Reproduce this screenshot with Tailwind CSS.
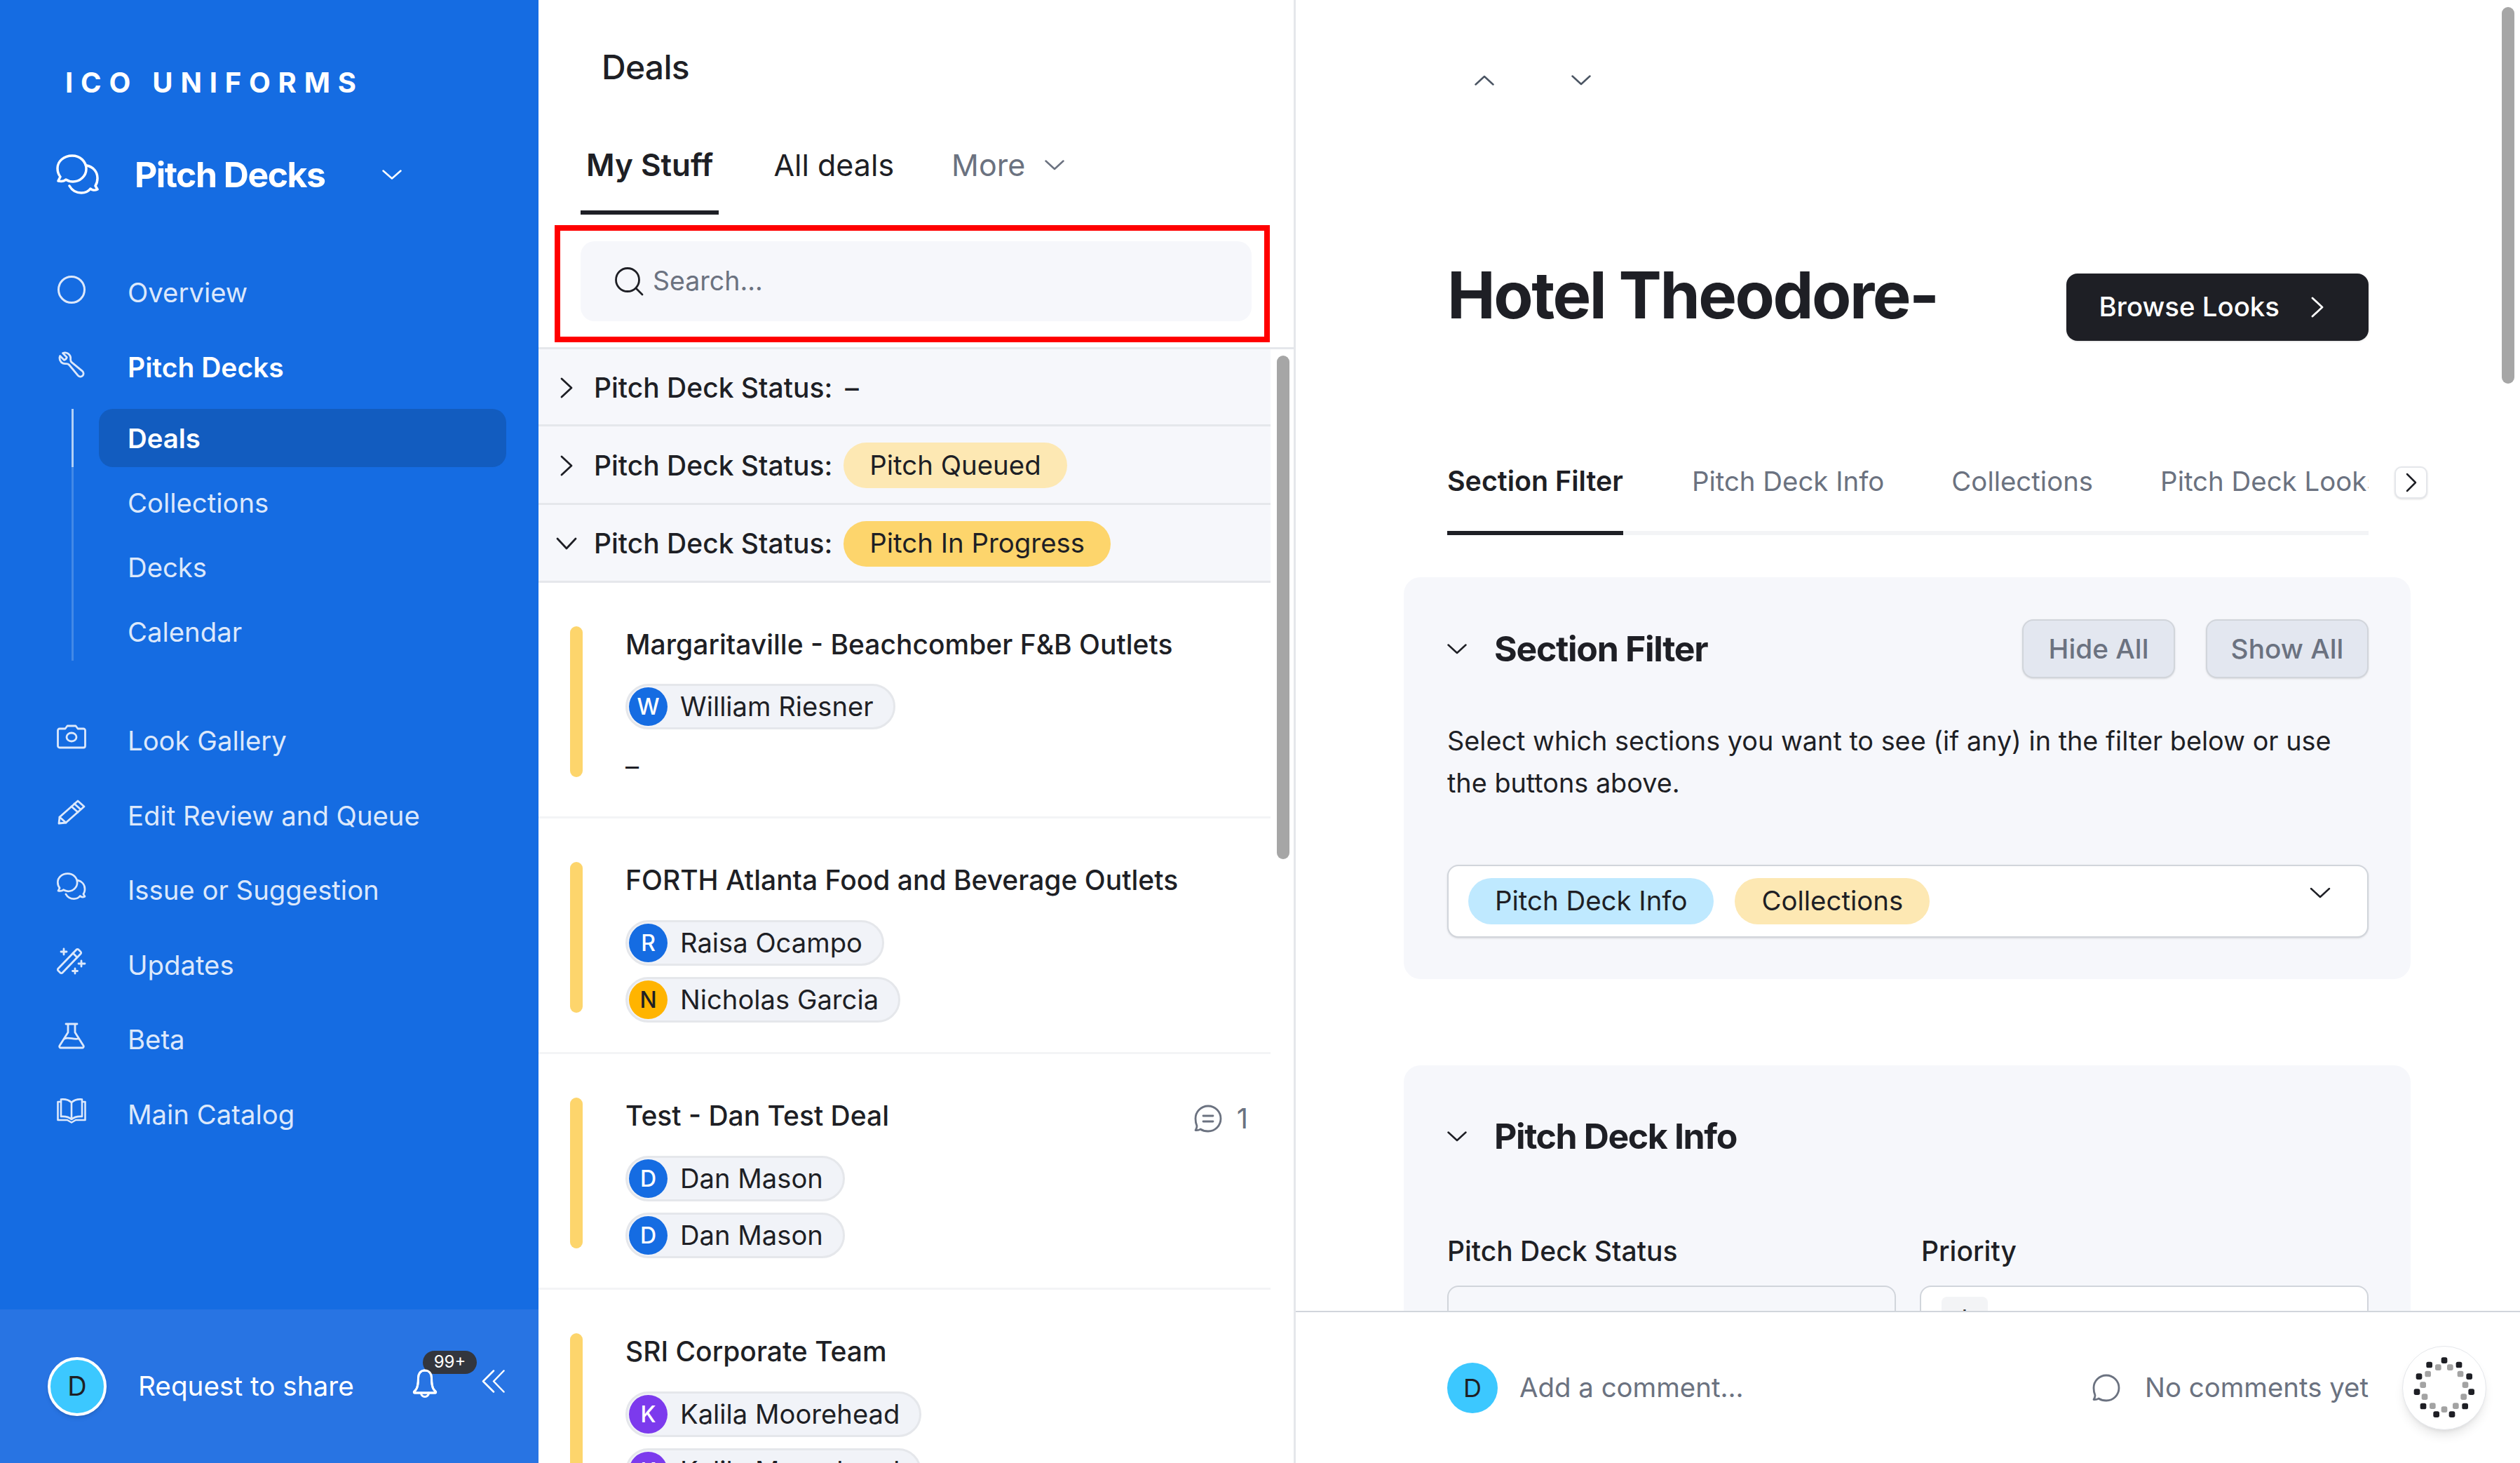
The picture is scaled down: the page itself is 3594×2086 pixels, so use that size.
<!DOCTYPE html>
<html lang="en">
<head>
    <meta charset="UTF-8">
    <title>ICO Uniforms - Deals</title>
    <script src="https://cdn.jsdelivr.net/npm/@tailwindcss/browser@4"></script>
</head>
<body class="bg-white">
<div class="flex w-[3594px] h-[2086px] overflow-hidden bg-white text-[#1e1f25] antialiased font-['Inter',sans-serif]">

    <!-- sidebar -->
    <aside class="flex flex-col w-[768px] shrink-0 bg-[#156ce2] text-white">
        <div class="pt-[98px] pl-[93px] h-[138px] text-[40px] leading-[40px] font-bold tracking-[0.27em] whitespace-nowrap">ICO UNIFORMS</div>
        <div class="flex items-center h-[60px] mt-[81px] pl-[80px]">
            <svg class="w-[62px] h-[58px] shrink-0" viewBox="0 0 62 58" fill="none" stroke="currentColor" stroke-width="3.5" stroke-linejoin="round" stroke-linecap="round"><path d="M23 2C11 2 2 10 2 20c0 5 1.500 9 4 12l-3 6c5 1 9 0 11-2 3 2 6 3 10 3 10 0 19-8 19-18C43 10 34 2 23 2z"/><path d="M44 16c9 2 15 9 15 18 0 4-1 8-3 11l3 5c-4 2-8 1-10-1-3 4-8 6-13 6-7 0-13-3-17-10"/></svg>
            <span class="ml-[50px] text-[50px] leading-[60px] font-bold tracking-[-0.031em] whitespace-nowrap">Pitch Decks</span>
            <svg class="w-[28px] h-[14px] ml-[82px]" viewBox="0 0 28 14" fill="none" stroke="currentColor" stroke-width="2.500" stroke-linecap="round" stroke-linejoin="round"><path d="M1.500 1.500 14 12.500 26.500 1.500"/></svg>
        </div>

        <nav class="mt-[84px] text-[38.300px] leading-[50px] text-[#dce8fb]">
            <a class="flex items-center h-[107px] pl-[81px]">
                <span class="flex justify-center w-[101px] pr-[59px] mb-[8px]"><svg class="w-[42px] h-[42px] shrink-0" viewBox="0 0 42 42" fill="none" stroke="currentColor" stroke-width="3"><circle cx="21" cy="21" r="18.500"/></svg></span>
                Overview
            </a>
            <a class="flex items-center h-[107px] pl-[81px] text-[39px] text-white font-semibold">
                <span class="flex justify-center w-[101px] pr-[59px] mb-[8px] text-[#dce8fb]"><svg class="w-[42px] h-[42px] shrink-0" viewBox="0 0 24 24" fill="none" stroke="currentColor" stroke-width="1.600" stroke-linecap="round" stroke-linejoin="round"><g transform="translate(24 0) scale(-1 1)"><path d="M21.750 6.750a4.500 4.500 0 01-4.884 4.484c-1.076-.091-2.264.071-2.950.904l-7.152 8.684a2.548 2.548 0 11-3.586-3.586l8.684-7.152c.833-.686.995-1.874.904-2.950a4.500 4.500 0 016.336-4.486l-3.276 3.276a3.004 3.004 0 002.250 2.250l3.276-3.276c.280.633.402 1.330.402 2.032z"/></g></svg></span>
                Pitch Decks
            </a>
            <div class="relative flex flex-col gap-[9px] mt-[6px] ml-[141px] w-[581px]">
                <span class="absolute -left-[39px] top-0 bottom-0 w-[3px] bg-white/20"></span>
                <span class="absolute -left-[39px] top-0 h-[83px] w-[3px] bg-white/60"></span>
                <a class="flex items-center h-[83px] pl-[41px] rounded-[20px] bg-[#125cbf] text-white font-semibold">Deals</a>
                <a class="flex items-center h-[83px] pl-[41px]">Collections</a>
                <a class="flex items-center h-[83px] pl-[41px]">Decks</a>
                <a class="flex items-center h-[83px] pl-[41px]">Calendar</a>
            </div>
            <div class="mt-[61px]">
                <a class="flex items-center h-[106.500px] pl-[81px]">
                    <span class="flex justify-center w-[101px] pr-[59px] mb-[10px]"><svg class="w-[42px] h-[36px] shrink-0" viewBox="0 0 42 36" fill="none" stroke="currentColor" stroke-width="2.800" stroke-linejoin="round"><path d="M4 6h8l3-4h12l3 4h8a2.500 2.500 0 0 1 2.500 2.500v22a2.500 2.500 0 0 1-2.500 2.500H4a2.500 2.500 0 0 1-2.500-2.500v-22A2.500 2.500 0 0 1 4 6z"/><ellipse cx="21" cy="18" rx="7" ry="6"/></svg></span>
                    Look Gallery
                </a>
                <a class="flex items-center h-[106.500px] pl-[81px]">
                    <span class="flex justify-center w-[101px] pr-[59px] mb-[10px]"><svg class="w-[40px] h-[36px] shrink-0" viewBox="0 0 40 36" fill="none" stroke="currentColor" stroke-width="2.800" stroke-linejoin="round" stroke-linecap="round"><path d="M29 2l9 8L12 33l-10 1 1-9z"/><path d="M24 6l9 8M20 10l9 8M3 25l9 8"/></svg></span>
                    Edit Review and Queue
                </a>
                <a class="flex items-center h-[106.500px] pl-[81px]">
                    <span class="flex justify-center w-[101px] pr-[59px] mb-[10px]"><svg class="w-[42px] h-[40px] shrink-0" viewBox="0 0 62 58" fill="none" stroke="currentColor" stroke-width="4" stroke-linejoin="round" stroke-linecap="round"><path d="M23 2C11 2 2 10 2 20c0 5 1.500 9 4 12l-3 6c5 1 9 0 11-2 3 2 6 3 10 3 10 0 19-8 19-18C43 10 34 2 23 2z"/><path d="M44 16c9 2 15 9 15 18 0 4-1 8-3 11l3 5c-4 2-8 1-10-1-3 4-8 6-13 6-7 0-13-3-17-10"/></svg></span>
                    Issue or Suggestion
                </a>
                <a class="flex items-center h-[106.500px] pl-[81px]">
                    <span class="flex justify-center w-[101px] pr-[59px] mb-[10px]"><svg class="w-[42px] h-[40px] shrink-0" viewBox="0 0 42 40" fill="none" stroke="currentColor" stroke-width="2.800" stroke-linejoin="round" stroke-linecap="round"><path d="M2 30L28 3a2 2 0 0 1 3 0l3 3a2 2 0 0 1 0 3L8 36a2 2 0 0 1-3 0l-3-3a2 2 0 0 1 0-3z"/><path d="M23 8l6 6"/><path d="M10 2v8M6 6h8M35 19v8M31 23h9M26 30v7M22.500 33.500h7"/></svg></span>
                    Updates
                </a>
                <a class="flex items-center h-[106.500px] pl-[81px]">
                    <span class="flex justify-center w-[101px] pr-[59px] mb-[10px]"><svg class="w-[38px] h-[38px] shrink-0" viewBox="0 0 38 38" fill="none" stroke="currentColor" stroke-width="2.800" stroke-linejoin="round" stroke-linecap="round"><path d="M11 2h16M14 2v12L2 33a2 2 0 0 0 2 3h30a2 2 0 0 0 2-3L24 14V2"/><path d="M9 23c6-3 13 2 20 0"/></svg></span>
                    Beta
                </a>
                <a class="flex items-center h-[106.500px] pl-[81px]">
                    <span class="flex justify-center w-[101px] pr-[59px] mb-[10px]"><svg class="w-[42px] h-[38px] shrink-0" viewBox="0 0 42 38" fill="none" stroke="currentColor" stroke-width="2.600" stroke-linejoin="round" stroke-linecap="round"><path d="M21 7C17 3 12 2 6 2.500V27c6-.5 11 .5 15 4 4-3.500 9-4.500 15-4V2.500C30 2 25 3 21 7zM21 7v24"/><path d="M6 6H1.500v26H15l6 3.500 6-3.500h13.500V6H36"/></svg></span>
                    Main Catalog
                </a>
            </div>
        </nav>

        <div class="flex items-center h-[219px] mt-auto pl-[68px] bg-[#2874e3]">
            <span class="flex items-center justify-center w-[84px] h-[84px] shrink-0 rounded-full border-[4px] border-white bg-[#3cc8ff] text-[#1e1f25] text-[38px] shadow-md">D</span>
            <span class="ml-[45px] text-[38.700px] text-white whitespace-nowrap">Request to share</span>
            <span class="relative ml-auto mr-[63px] mb-[8px]">
                <svg class="w-[36px] h-[42px]" viewBox="0 0 36 42" fill="none" stroke="white" stroke-width="3" stroke-linejoin="round" stroke-linecap="round"><path d="M18 2c-6.500 0-9.500 5-9.500 11 0 8-1 13-3 16l-3 3.500a1 1 0 0 0 1 1.500h29a1 1 0 0 0 1-1.500l-3-3.500c-2-3-3-8-3-16 0-6-3-11-9.500-11z"/><path d="M12.500 34a5.500 5.500 0 0 0 11 0"/></svg>
                <span class="absolute left-[15px] -top-[26px] flex items-center justify-center w-[77px] h-[33px] rounded-full bg-[#33363e] text-white text-[24px] leading-none">99+</span>
                <svg class="absolute left-0 top-0 w-[36px] h-[42px]" viewBox="0 0 36 42" fill="none" stroke="white" stroke-width="3" stroke-linejoin="round" stroke-linecap="round"><path d="M18 2c-6.500 0-9.500 5-9.500 11 0 8-1 13-3 16l-3 3.500a1 1 0 0 0 1 1.500h29a1 1 0 0 0 1-1.500l-3-3.500c-2-3-3-8-3-16 0-6-3-11-9.500-11z"/></svg>
            </span>
            <svg class="w-[33px] h-[33px] mr-[48px] mb-[14px]" viewBox="0 0 33 33" fill="none" stroke="white" stroke-width="2.500" stroke-linecap="round" stroke-linejoin="round"><path d="M17 1.500L2 16.500l15 15M31.500 1.500L17 16.500l14.500 15"/></svg>
        </div>
    </aside>

    <!-- deals list -->
    <section class="relative flex flex-col w-[1080px] shrink-0 border-r-[3px] border-[#e5e7eb]">
        <h1 class="pt-[66px] pl-[90px] h-[126px] text-[48px] leading-[60px] font-medium tracking-[-0.015em]">Deals</h1>
        <div class="flex gap-[70px] mt-[44px] pl-[60px] text-[43px]">
            <a class="flex items-center h-[136px] px-[8px] border-b-[6px] border-[#1e1f25] text-[44px] font-semibold">My Stuff</a>
            <a class="flex items-center h-[136px] px-[8px] border-b-[6px] border-transparent">All deals</a>
            <a class="flex items-center h-[136px] px-[8px] -ml-[4px] border-b-[6px] border-transparent text-[#6b7280]">More
                <svg class="w-[28px] h-[15px] ml-[28px]" viewBox="0 0 28 15" fill="none" stroke="currentColor" stroke-width="2.500" stroke-linecap="round" stroke-linejoin="round"><path d="M1.500 1.500 14 13 26.500 1.500"/></svg>
            </a>
        </div>
        <div class="mt-[15px] ml-[23px] w-[1020px] h-[167px] border-[8px] border-[#ff0000] pt-[15px] pl-[29px] pr-[18px]">
            <div class="flex items-center h-[114px] pl-[48px] rounded-[20px] bg-[#f6f7fb] text-[37.500px] text-[#6b7280]">
                <svg class="w-[42px] h-[42px] mr-[13px]" viewBox="0 0 42 42" fill="none" stroke="#1e1f25" stroke-width="2.800" stroke-linecap="round"><circle cx="19" cy="19" r="16.500"/><path d="M31 31l9 9"/></svg>
                Search...
            </div>
        </div>
        <div class="mt-[7px] border-t-[3px] border-[#e5e7eb] w-[1077px]"></div>

        <div class="w-[1044px] flex-1 overflow-hidden">
            <div class="flex items-center h-[110px] pt-[3px] border-b-[3px] border-[#e5e7eb] bg-[#f6f7fb] text-[39px] font-medium">
                <span class="flex justify-center w-[79px]"><svg class="w-[18px] h-[30px]" viewBox="0 0 18 30" fill="none" stroke="#1e1f25" stroke-width="2.800" stroke-linecap="round" stroke-linejoin="round"><path d="M2 2l14 13L2 28"/></svg></span>
                <span>Pitch Deck Status:</span><span class="ml-[18px]">–</span>
            </div>
            <div class="flex items-center h-[111.500px] pt-[3px] border-b-[3px] border-[#e5e7eb] bg-[#f6f7fb] text-[39px] font-medium">
                <span class="flex justify-center w-[79px]"><svg class="w-[18px] h-[30px]" viewBox="0 0 18 30" fill="none" stroke="#1e1f25" stroke-width="2.800" stroke-linecap="round" stroke-linejoin="round"><path d="M2 2l14 13L2 28"/></svg></span>
                <span>Pitch Deck Status:</span>
                <span class="flex items-center h-[65px] ml-[16px] px-[37px] rounded-full bg-[#fde8b3] text-[38.400px] font-normal">Pitch Queued</span>
            </div>
            <div class="flex items-center h-[111.500px] pt-[3px] border-b-[3px] border-[#e5e7eb] bg-[#f6f7fb] text-[39px] font-medium">
                <span class="flex justify-center w-[79px]"><svg class="w-[30px] h-[18px]" viewBox="0 0 30 18" fill="none" stroke="#1e1f25" stroke-width="2.800" stroke-linecap="round" stroke-linejoin="round"><path d="M2 2l13 14L28 2"/></svg></span>
                <span>Pitch Deck Status:</span>
                <span class="flex items-center h-[65px] ml-[16px] px-[37px] rounded-full bg-[#fdd56c] text-[38.400px] font-normal">Pitch In Progress</span>
            </div>

            <div class="flex h-[336px] pt-[62px] border-b-[3px] border-[#f3f4f6] text-[38.200px]">
                <span class="w-[18px] h-[215px] ml-[45px] shrink-0 rounded-full bg-[#fdd56c]"></span>
                <div class="ml-[61px] w-[888px]">
                    <div class="h-[58px] -mt-[3px] leading-[58px] text-[39px] font-medium">Margaritaville - Beachcomber F&amp;B Outlets</div>
                    <div class="flex flex-col items-start mt-[27px]">
                        <span class="flex items-center h-[65px] pl-[2px] pr-[28px] rounded-full border-[3px] border-[#e5e7eb] bg-[#f1f3f8]"><span class="flex items-center justify-center w-[55px] h-[55px] mr-[18px] rounded-full bg-[#156ce2] text-white text-[32px] font-medium">W</span>William Riesner</span>
                    </div>
                    <div class="mt-[32px] h-[40px] leading-[40px]">–</div>
                </div>
            </div>

            <div class="flex h-[336px] pt-[62px] border-b-[3px] border-[#f3f4f6] text-[38.200px]">
                <span class="w-[18px] h-[215px] ml-[45px] shrink-0 rounded-full bg-[#fdd56c]"></span>
                <div class="ml-[61px] w-[888px]">
                    <div class="h-[58px] -mt-[3px] leading-[58px] text-[39px] font-medium">FORTH Atlanta Food and Beverage Outlets</div>
                    <div class="flex flex-col items-start gap-[16px] mt-[28px]">
                        <span class="flex items-center h-[65px] pl-[2px] pr-[28px] rounded-full border-[3px] border-[#e5e7eb] bg-[#f1f3f8]"><span class="flex items-center justify-center w-[55px] h-[55px] mr-[18px] rounded-full bg-[#156ce2] text-white text-[32px] font-medium">R</span>Raisa Ocampo</span>
                        <span class="flex items-center h-[65px] pl-[2px] pr-[28px] rounded-full border-[3px] border-[#e5e7eb] bg-[#f1f3f8]"><span class="flex items-center justify-center w-[55px] h-[55px] mr-[18px] rounded-full bg-[#ffb400] text-[#1e1f25] text-[32px] font-medium">N</span>Nicholas Garcia</span>
                    </div>
                </div>
            </div>

            <div class="flex h-[336px] pt-[62px] border-b-[3px] border-[#f3f4f6] text-[38.200px]">
                <span class="w-[18px] h-[215px] ml-[45px] shrink-0 rounded-full bg-[#fdd56c]"></span>
                <div class="ml-[61px] w-[888px]">
                    <div class="flex items-center h-[58px] -mt-[3px] leading-[58px] text-[39px] font-medium">
                        Test - Dan Test Deal
                        <svg class="w-[40px] h-[40px] ml-auto mt-[8px]" viewBox="0 0 40 40" fill="none" stroke="#6b7280" stroke-width="2.800" stroke-linecap="round" stroke-linejoin="round"><path d="M20 2c10 0 18 8 18 18s-8 18-18 18c-4 0-8-1-11-3-2 1.500-4 1.800-7 1.500 1.500-2 2-3.500 2-6C2.500 27 2 23.500 2 20 2 10 10 2 20 2z"/><path d="M13 16h14M13 24h14"/></svg>
                        <span class="ml-[21px] mt-[8px] text-[40px] font-normal text-[#6b7280]">1</span>
                    </div>
                    <div class="flex flex-col items-start gap-[16px] mt-[28px]">
                        <span class="flex items-center h-[65px] pl-[2px] pr-[28px] rounded-full border-[3px] border-[#e5e7eb] bg-[#f1f3f8]"><span class="flex items-center justify-center w-[55px] h-[55px] mr-[18px] rounded-full bg-[#156ce2] text-white text-[32px] font-medium">D</span>Dan Mason</span>
                        <span class="flex items-center h-[65px] pl-[2px] pr-[28px] rounded-full border-[3px] border-[#e5e7eb] bg-[#f1f3f8]"><span class="flex items-center justify-center w-[55px] h-[55px] mr-[18px] rounded-full bg-[#156ce2] text-white text-[32px] font-medium">D</span>Dan Mason</span>
                    </div>
                </div>
            </div>

            <div class="flex h-[336px] pt-[62px] text-[38.200px]">
                <span class="w-[18px] h-[215px] ml-[45px] shrink-0 rounded-full bg-[#fdd56c]"></span>
                <div class="ml-[61px] w-[888px]">
                    <div class="h-[58px] -mt-[3px] leading-[58px] text-[39px] font-medium">SRI Corporate Team</div>
                    <div class="flex flex-col items-start gap-[16px] mt-[28px]">
                        <span class="flex items-center h-[65px] pl-[2px] pr-[28px] rounded-full border-[3px] border-[#e5e7eb] bg-[#f1f3f8]"><span class="flex items-center justify-center w-[55px] h-[55px] mr-[18px] rounded-full bg-[#7c3aed] text-white text-[32px] font-medium">K</span>Kalila Moorehead</span>
                        <span class="flex items-center h-[65px] pl-[2px] pr-[28px] rounded-full border-[3px] border-[#e5e7eb] bg-[#f1f3f8]"><span class="flex items-center justify-center w-[55px] h-[55px] mr-[18px] rounded-full bg-[#7c3aed] text-white text-[32px] font-medium">K</span>Kalila Moorehead</span>
                    </div>
                </div>
            </div>
        </div>
        <span class="absolute left-[1053px] top-[507px] w-[18px] h-[718px] rounded-full bg-[#a6a6a6]"></span>
    </section>

    <!-- deal detail -->
    <main class="relative flex flex-col flex-1 min-w-0">
        <div class="flex-1 min-h-0 overflow-hidden pl-[154px]">
            <div class="flex gap-[110px] h-[366px] pt-[107px] pl-[101px]">
                <svg class="w-[28px] h-[15px]" viewBox="0 0 28 15" fill="none" stroke="#4b5563" stroke-width="2.500" stroke-linecap="round" stroke-linejoin="round"><path d="M1.500 13.500 14 2 26.500 13.500"/></svg>
                <svg class="w-[28px] h-[15px]" viewBox="0 0 28 15" fill="none" stroke="#4b5563" stroke-width="2.500" stroke-linecap="round" stroke-linejoin="round"><path d="M1.500 1.500 14 13 26.500 1.500"/></svg>
            </div>
            <div class="flex justify-between items-start h-[251px] ml-[62px] w-[1314px]">
                <h2 class="text-[92px] leading-[110px] font-bold tracking-[-0.027em] whitespace-nowrap">Hotel Theodore-</h2>
                <button class="flex items-center h-[96px] mt-[24px] pl-[47px] pr-[64px] rounded-[16px] bg-[#1e1f25] text-white text-[38.400px] font-medium shadow-sm">Browse Looks
                    <svg class="w-[18px] h-[30px] ml-[45px]" viewBox="0 0 18 30" fill="none" stroke="white" stroke-width="2.800" stroke-linecap="round" stroke-linejoin="round"><path d="M2 2l14 13L2 28"/></svg>
                </button>
            </div>
            <div class="relative ml-[62px] w-[1314px]">
                <div class="flex gap-[96px] h-[146px] overflow-hidden shadow-[inset_0_-6px_0_#f3f4f6] text-[38.400px] text-[#6b7280] whitespace-nowrap">
                    <a class="flex items-center border-b-[6px] border-[#1e1f25] text-[39.400px] font-semibold text-[#1e1f25] mr-[2px]">Section Filter</a>
                    <a class="flex items-center border-b-[6px] border-transparent">Pitch Deck Info</a>
                    <a class="flex items-center border-b-[6px] border-transparent">Collections</a>
                    <a class="flex items-center border-b-[6px] border-transparent">Pitch Deck Looks</a>
                </div>
                <button class="absolute left-[1351px] top-[48px] flex items-center justify-center w-[47px] h-[46px] rounded-[10px] border-[2px] border-[#e5e7eb] bg-white shadow-sm">
                    <svg class="w-[16px] h-[28px]" viewBox="0 0 16 28" fill="none" stroke="#1e1f25" stroke-width="2.500" stroke-linecap="round" stroke-linejoin="round"><path d="M2 2l12 12L2 26"/></svg>
                </button>
            </div>

            <div class="mt-[60px] w-[1436px] h-[573px] pt-[60px] pl-[62px] pr-[60px] rounded-[24px] bg-[#f6f7fb]">
                <div class="flex items-center h-[84px]">
                    <svg class="w-[28px] h-[15px] mr-[39px]" viewBox="0 0 28 15" fill="none" stroke="#1e1f25" stroke-width="2.500" stroke-linecap="round" stroke-linejoin="round"><path d="M1.500 1.500 14 13 26.500 1.500"/></svg>
                    <span class="text-[50px] font-bold tracking-[-0.026em]">Section Filter</span>
                    <button class="ml-auto h-[84px] w-[218px] rounded-[16px] border-[2px] border-[#d1d5db] bg-[#e3e7f0] text-[38.800px] font-medium text-[#6b7280] shadow-sm">Hide All</button>
                    <button class="ml-[44px] h-[84px] w-[232px] rounded-[16px] border-[2px] border-[#d1d5db] bg-[#e3e7f0] text-[38.800px] font-medium text-[#6b7280] shadow-sm">Show All</button>
                </div>
                <p class="mt-[60px] text-[37.800px] leading-[59.500px]">Select which sections you want to see (if any) in the filter below or use the buttons above.</p>
                <div class="flex items-center gap-[30px] h-[104px] mt-[87px] pl-[28px] pr-[52px] rounded-[16px] border-[2px] border-[#d1d5db] bg-white text-[38.400px] shadow-sm">
                    <span class="flex items-center h-[66px] px-[38px] rounded-full bg-[#bfe9ff]">Pitch Deck Info</span>
                    <span class="flex items-center h-[66px] px-[38px] rounded-full bg-[#fde8b3]">Collections</span>
                    <svg class="w-[30px] h-[16px] ml-auto mb-[24px]" viewBox="0 0 30 16" fill="none" stroke="#1e1f25" stroke-width="2.500" stroke-linecap="round" stroke-linejoin="round"><path d="M2 2l13 12L28 2"/></svg>
                </div>
            </div>

            <div class="mt-[123px] w-[1436px] h-[500px] pt-[59px] pl-[62px] pr-[60px] rounded-[24px] bg-[#f6f7fb]">
                <div class="flex items-center h-[84px]">
                    <svg class="w-[28px] h-[15px] mr-[39px]" viewBox="0 0 28 15" fill="none" stroke="#1e1f25" stroke-width="2.500" stroke-linecap="round" stroke-linejoin="round"><path d="M1.500 1.500 14 13 26.500 1.500"/></svg>
                    <span class="text-[50px] font-bold tracking-[-0.028em]">Pitch Deck Info</span>
                </div>
                <div class="grid grid-cols-2 gap-x-[34px] mt-[97px] text-[39px] font-medium">
                    <div>
                        <div class="h-[50px] leading-[50px]">Pitch Deck Status</div>
                        <div class="mt-[24px] h-[100px] rounded-[16px] border-[2px] border-[#d1d5db] bg-[#f6f7fb]"></div>
                    </div>
                    <div>
                        <div class="h-[50px] leading-[50px] pl-[2px]">Priority</div>
                        <div class="mt-[24px] h-[100px] pt-[14px] pl-[29px] rounded-[16px] border-[2px] border-[#d1d5db] bg-white">
                            <span class="flex items-center justify-center w-[66px] h-[66px] pb-[16px] rounded-[8px] bg-[#f3f4f6] font-normal">+</span>
                        </div>
                    </div>
                </div>
            </div>
        </div>

        <div class="relative flex items-center h-[217px] shrink-0 pl-[216px] pr-[48px] border-t-[2px] border-[#d1d5db] bg-white text-[38.400px] text-[#6b7280]">
            <span class="flex items-center justify-center w-[72px] h-[72px] rounded-full bg-[#3cc8ff] text-[#1e1f25] text-[36px]">D</span>
            <span class="ml-[31px]">Add a comment...</span>
            <svg class="w-[40px] h-[40px] ml-auto" viewBox="0 0 40 40" fill="none" stroke="#6b7280" stroke-width="2.800" stroke-linecap="round" stroke-linejoin="round"><path d="M20 2c10 0 18 8 18 18s-8 18-18 18c-4 0-8-1-11-3-2 1.500-4 1.800-7 1.500 1.500-2 2-3.500 2-6C2.500 27 2 23.500 2 20 2 10 10 2 20 2z"/></svg>
            <span class="ml-[35px]">No comments yet</span>
            <span class="flex items-center justify-center w-[120px] h-[120px] ml-[48px] rounded-full border-[1px] border-[#e5e7eb] bg-white shadow-lg">
                <svg class="w-[120px] h-[120px] shrink-0" viewBox="0 0 360 360">
                    <g fill="#1e1f25">
                        <rect x="167" y="49" width="26" height="26" rx="8"/><rect x="230" y="68" width="26" height="26" rx="8"/><rect x="274" y="118" width="26" height="26" rx="8"/><rect x="283" y="184" width="26" height="26" rx="8"/><rect x="256" y="245" width="26" height="26" rx="8"/><rect x="200" y="280" width="26" height="26" rx="8"/><rect x="133" y="280" width="26" height="26" rx="8"/><rect x="77" y="245" width="26" height="26" rx="8"/><rect x="50" y="184" width="26" height="26" rx="8"/><rect x="59" y="118" width="26" height="26" rx="8"/><rect x="103" y="68" width="26" height="26" rx="8"/>
                    </g>
                    <g fill="#a3a3a3">
                        <rect x="192" y="79" width="26" height="26" rx="8"/><rect x="236" y="107" width="26" height="26" rx="8"/><rect x="257" y="154" width="26" height="26" rx="8"/><rect x="250" y="205" width="26" height="26" rx="8"/><rect x="216" y="244" width="26" height="26" rx="8"/><rect x="167" y="259" width="26" height="26" rx="8"/><rect x="117" y="244" width="26" height="26" rx="8"/><rect x="83" y="205" width="26" height="26" rx="8"/><rect x="76" y="154" width="26" height="26" rx="8"/><rect x="97" y="107" width="26" height="26" rx="8"/><rect x="141" y="79" width="26" height="26" rx="8"/>
                    </g>
                </svg>
            </span>
        </div>
        <span class="absolute right-[8px] top-[10px] w-[18px] h-[537px] rounded-full bg-[#a6a6a6]"></span>
    </main>
</div>
</body>
</html>
